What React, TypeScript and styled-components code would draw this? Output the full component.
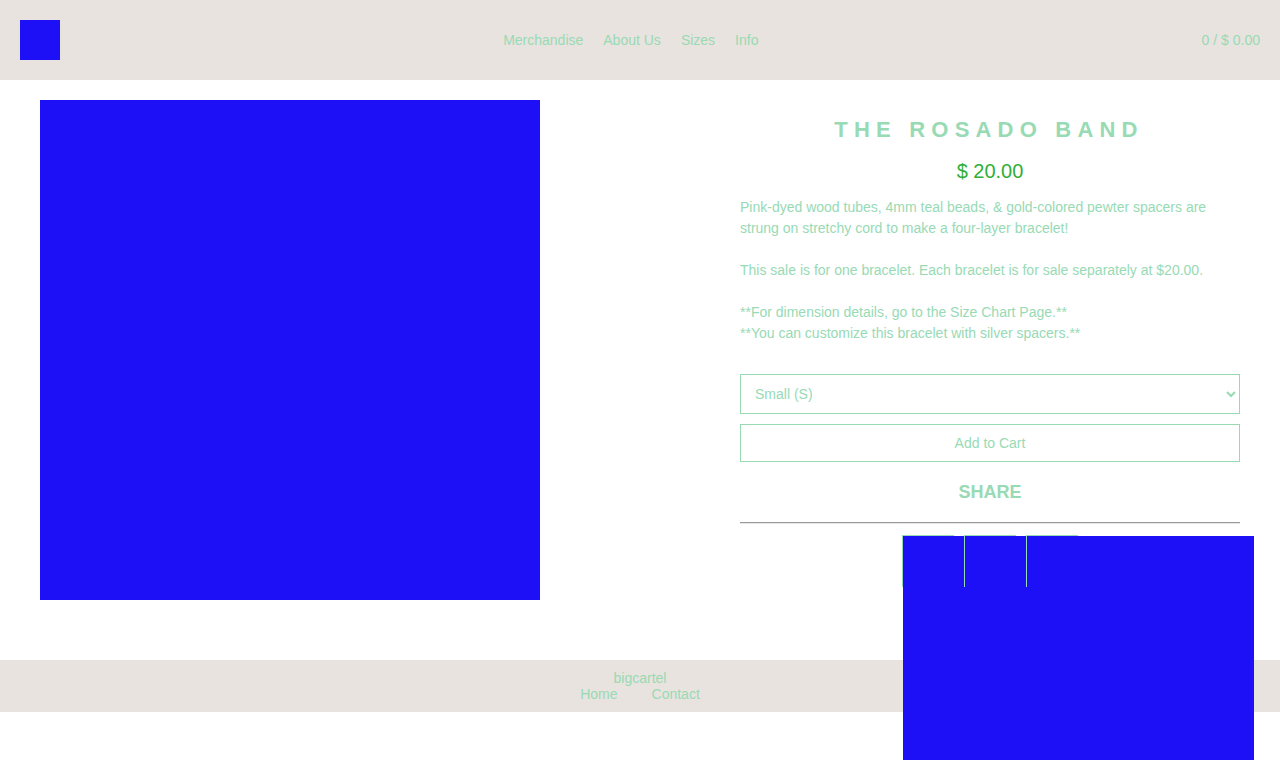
import React from "react";
import styled, { createGlobalStyle } from "styled-components";

const MINT = "#98dab4";
const BLUE = "#1e10f6";
const SAND = "#e8e3df";

const Global = createGlobalStyle`
  html, body { margin: 0; padding: 0; background: #fff; }
  body { font-family: "Liberation Sans", Arial, sans-serif; font-size: 14px; color: ${MINT}; }
  * { box-sizing: border-box; }
`;

const Page = styled.div`
  position: relative;
  width: 1280px;
  min-height: 764px;
`;

const Header = styled.header`
  height: 80px;
  background: ${SAND};
  padding: 0 20px;
  display: flex;
  align-items: center;
  justify-content: space-between;
`;

const Logo = styled.div`
  width: 40px;
  height: 40px;
  background: ${BLUE};
`;

const Nav = styled.nav`
  display: flex;
  gap: 20px;
`;

const NavLink = styled.a`
  color: ${MINT};
  text-decoration: none;
  font-size: 14px;
  line-height: 16px;
`;

const Cart = styled.div`
  font-size: 14px;
  line-height: 16px;
`;

const Main = styled.main`
  display: flex;
  justify-content: space-between;
  padding: 20px 40px 60px;
`;

const ProductImage = styled.div`
  width: 500px;
  height: 500px;
  background: ${BLUE};
`;

const Details = styled.section`
  width: 500px;
  padding-top: 17px;
  display: flex;
  flex-direction: column;
`;

const Title = styled.h1`
  margin: 0;
  font-size: 22px;
  line-height: 26px;
  font-weight: bold;
  letter-spacing: 6.2px;
  text-align: center;
  padding-right: 2px;
  color: ${MINT};
`;

const Price = styled.div`
  margin-top: 16px;
  font-size: 20px;
  line-height: 24px;
  text-align: center;
  color: #30ae38;
`;

const Description = styled.div`
  margin-top: 14px;
  font-size: 14px;
  line-height: 21px;
`;

const Para = styled.p`
  margin: 0 0 21px;
  &:last-child { margin-bottom: 0; }
`;

const Select = styled.select`
  margin-top: 30px;
  width: 100%;
  height: 40px;
  border: 1px solid ${MINT};
  border-radius: 0;
  background: #fff;
  color: ${MINT};
  font-family: "Liberation Sans", Arial, sans-serif;
  font-size: 14px;
  padding: 0 10px;
  outline: none;
`;

const AddButton = styled.button`
  margin-top: 10px;
  width: 100%;
  height: 38px;
  border: 1px solid ${MINT};
  border-radius: 0;
  background: #fff;
  color: ${MINT};
  font-family: "Liberation Sans", Arial, sans-serif;
  font-size: 14px;
  cursor: pointer;
`;

const ShareTitle = styled.h2`
  margin: 20px 0 0;
  font-size: 18px;
  line-height: 21px;
  font-weight: bold;
  text-align: center;
  color: ${MINT};
`;

const Rule = styled.hr`
  margin: 19px 0 0;
  width: 100%;
  height: 0;
  border: 0;
  border-top: 1px solid #9a9a9a;
  border-bottom: 1px solid #e6e6e6;
`;

const ShareRow = styled.div`
  position: relative;
  margin-top: 11px;
  display: flex;
  justify-content: center;
  gap: 10px;
`;

const ShareBox = styled.a`
  position: relative;
  z-index: 2;
  display: block;
  width: 52px;
  height: 52px;
  border-top: 1px solid ${MINT};
  border-left: 1px solid ${MINT};
  background: transparent;
`;

const Overlay = styled.div`
  position: absolute;
  z-index: 1;
  left: 163px;
  top: 1px;
  width: 351px;
  height: 224px;
  background: ${BLUE};
`;

const Footer = styled.footer`
  background: ${SAND};
  padding: 10px 0;
  display: flex;
  flex-direction: column;
  align-items: center;
  font-size: 14px;
  line-height: 16px;
`;

const FooterLinks = styled.div`
  display: flex;
  gap: 34px;
`;

const FooterLink = styled.a`
  color: ${MINT};
  text-decoration: none;
`;

export default function App() {
  return (
    <Page>
      <Global />
      <Header>
        <Logo />
        <Nav>
          <NavLink href="#">Merchandise</NavLink>
          <NavLink href="#">About Us</NavLink>
          <NavLink href="#">Sizes</NavLink>
          <NavLink href="#">Info</NavLink>
        </Nav>
        <Cart>0 / $ 0.00</Cart>
      </Header>
      <Main>
        <ProductImage />
        <Details>
          <Title>THE ROSADO BAND</Title>
          <Price>$ 20.00</Price>
          <Description>
            <Para>
              Pink-dyed wood tubes, 4mm teal beads, &amp; gold-colored pewter spacers are strung on
              stretchy cord to make a four-layer bracelet!
            </Para>
            <Para>This sale is for one bracelet. Each bracelet is for sale separately at $20.00.</Para>
            <Para>
              **For dimension details, go to the Size Chart Page.**
              <br />
              **You can customize this bracelet with silver spacers.**
            </Para>
          </Description>
          <Select defaultValue="S">
            <option value="S">Small (S)</option>
            <option value="M">Medium (M)</option>
            <option value="L">Large (L)</option>
          </Select>
          <AddButton>Add to Cart</AddButton>
          <ShareTitle>SHARE</ShareTitle>
          <Rule />
          <ShareRow>
            <ShareBox href="#" aria-label="Share 1" />
            <ShareBox href="#" aria-label="Share 2" />
            <ShareBox href="#" aria-label="Share 3" />
            <Overlay />
          </ShareRow>
        </Details>
      </Main>
      <Footer>
        <div>bigcartel</div>
        <FooterLinks>
          <FooterLink href="#">Home</FooterLink>
          <FooterLink href="#">Contact</FooterLink>
        </FooterLinks>
      </Footer>
    </Page>
  );
}
